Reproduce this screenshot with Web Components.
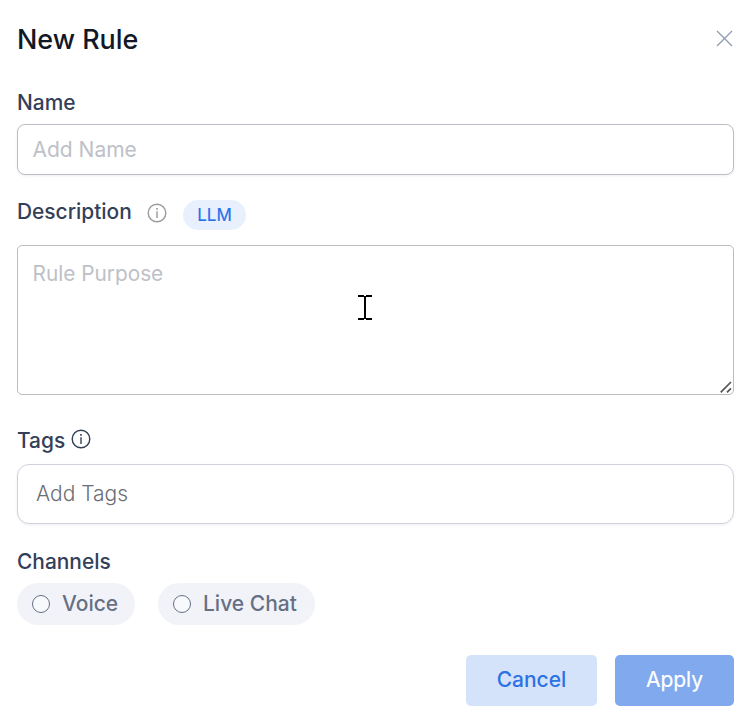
<!DOCTYPE html>
<html lang="en">
<head>
<meta charset="utf-8">
<title>New Rule</title>
<style>
body{margin:0;background:#fff;font-family:Inter,"Liberation Sans",sans-serif;color:#344059}
</style>
</head>
<body>
<rule-dialog></rule-dialog>
<script>
const define = (name, html) => {
  const t = document.createElement('template');
  t.innerHTML = html;
  customElements.define(name, class extends HTMLElement {
    constructor() {
      super();
      this.attachShadow({ mode: 'open' }).append(t.content.cloneNode(true));
    }
  });
};

define('info-icon', `
<style>:host{display:block;width:20px;height:20px;color:#9a9a9a}svg{display:block}</style>
<svg width="20" height="20" viewBox="0 0 20 20" fill="none" stroke="currentColor" stroke-width="1.4"><circle cx="10" cy="10" r="8.8"/><path d="M10 8.3V15" /><path d="M10 5v1.8" stroke-width="1.6"/></svg>`);

define('close-button', `
<style>:host{display:block;width:17px;height:17px;color:#8d9bb0}svg{display:block}</style>
<svg width="17" height="17" viewBox="0 0 17 17" fill="none" stroke="currentColor" stroke-width="1.3"><path d="M1 1l15 15M16 1L1 16"/></svg>`);

define('field-label', `
<style>:host{display:block;height:26px;font-size:20.9px;line-height:26px;font-weight:500;white-space:nowrap}</style>
<slot></slot>`);

define('text-box', `
<style>
:host{display:block;box-sizing:border-box;position:relative;border:1px solid #bcbec6;border-radius:8px;background:#fff;font-size:21px;line-height:26px;color:#bdc1c7;box-shadow:0 1px 3px rgba(16,24,40,.07);white-space:nowrap}
:host([kind=input]){height:51px;padding:12px 14.5px}
:host([kind=area]){height:150px;padding:15px 14.5px;border-radius:5px;box-shadow:none;border-color:#bcbcbe;font-size:20.8px}
:host([kind=tags]){height:60px;padding:16px 18px;border-radius:12px;border-color:#d0d3de;color:#6b6e76;font-weight:300}
svg{display:none;position:absolute;right:1px;bottom:1px}
:host([kind=area]) svg{display:block}
</style>
<slot></slot>
<svg width="12" height="12" viewBox="0 0 12 12" fill="none" stroke="#555" stroke-width="1.7"><path d="M.7 11.3L11 1M7 11.3L11 7.3"/></svg>`);

define('info-badge', `
<style>:host{display:block;box-sizing:border-box;width:63px;height:30px;border-radius:15px;background:#e9f0fd;color:#2570eb;font-size:17px;line-height:30px;font-weight:400;text-align:center;-webkit-text-stroke:.2px}</style>
<slot></slot>`);

define('channel-chip', `
<style>:host{display:flex;box-sizing:border-box;align-items:center;gap:12px;height:42px;padding:0 17px 0 15px;border-radius:21px;background:#f2f3f8;color:#667085;font-size:21px;line-height:26px;font-weight:500;white-space:nowrap}
i{flex:none;box-sizing:border-box;width:18px;height:18px;border:1px solid #667085;border-radius:50%;background:#f8f9fc}</style>
<i></i><slot></slot>`);

define('action-button', `
<style>:host{display:block;height:51px;width:131px;border-radius:5px;background:#d5e3fa;color:#2c72e4;font-size:21px;line-height:49px;font-weight:500;text-align:center}
:host([primary]){width:119px;background:#80a9ee;color:#fff;font-weight:400;-webkit-text-stroke:.2px}</style>
<slot></slot>`);

define('text-cursor', `
<style>:host{display:block;width:14px;height:25px}svg{display:block}</style>
<svg width="14" height="25" viewBox="0 0 14 25" shape-rendering="crispEdges"><path d="M0 0h6v1h2V0h6v2H8v21h6v2H8v-1H6v1H0v-2h6V2H0z"/></svg>`);

define('rule-dialog', `
<style>
:host{display:flex;flex-direction:column;box-sizing:border-box;width:752px;height:717px;padding:22px 18px 0 17px}
header{display:flex;justify-content:space-between;height:68px;color:#111827}
h1{margin:0;font-size:26.9px;line-height:34px;font-weight:500}
close-button{margin:8px 1px 0 0}
.name{margin-bottom:8px}
.row{display:flex;height:46px;margin-top:24px}
.row field-label{width:114px}
.row info-icon{margin:4px 0 0 16px}
.row info-badge{margin:1px 0 0 16px}
.area{position:relative}
text-cursor{position:absolute;left:341px;top:50px}
.tags{display:flex;height:36px;margin-top:33px}
.tags info-icon{color:#344054;margin:1px 0 0 6px}
.tags field-label{width:48px}
.channels{margin-top:25px}
.chips{display:flex;gap:23px;margin-top:8px}
.chips :first-child{width:118px}
.chips :last-child{width:157px}
footer{display:flex;justify-content:flex-end;gap:18px;margin-top:30px}
</style>
<header><h1>New Rule</h1><close-button></close-button></header>
<field-label class="name">Name</field-label>
<text-box kind="input">Add Name</text-box>
<div class="row"><field-label>Description</field-label><info-icon></info-icon><info-badge>LLM</info-badge></div>
<div class="area"><text-box kind="area">Rule Purpose</text-box><text-cursor></text-cursor></div>
<div class="tags"><field-label>Tags</field-label><info-icon></info-icon></div>
<text-box kind="tags">Add Tags</text-box>
<field-label class="channels">Channels</field-label>
<div class="chips"><channel-chip>Voice</channel-chip><channel-chip>Live Chat</channel-chip></div>
<footer><action-button>Cancel</action-button><action-button primary>Apply</action-button></footer>`);
</script>
</body>
</html>
